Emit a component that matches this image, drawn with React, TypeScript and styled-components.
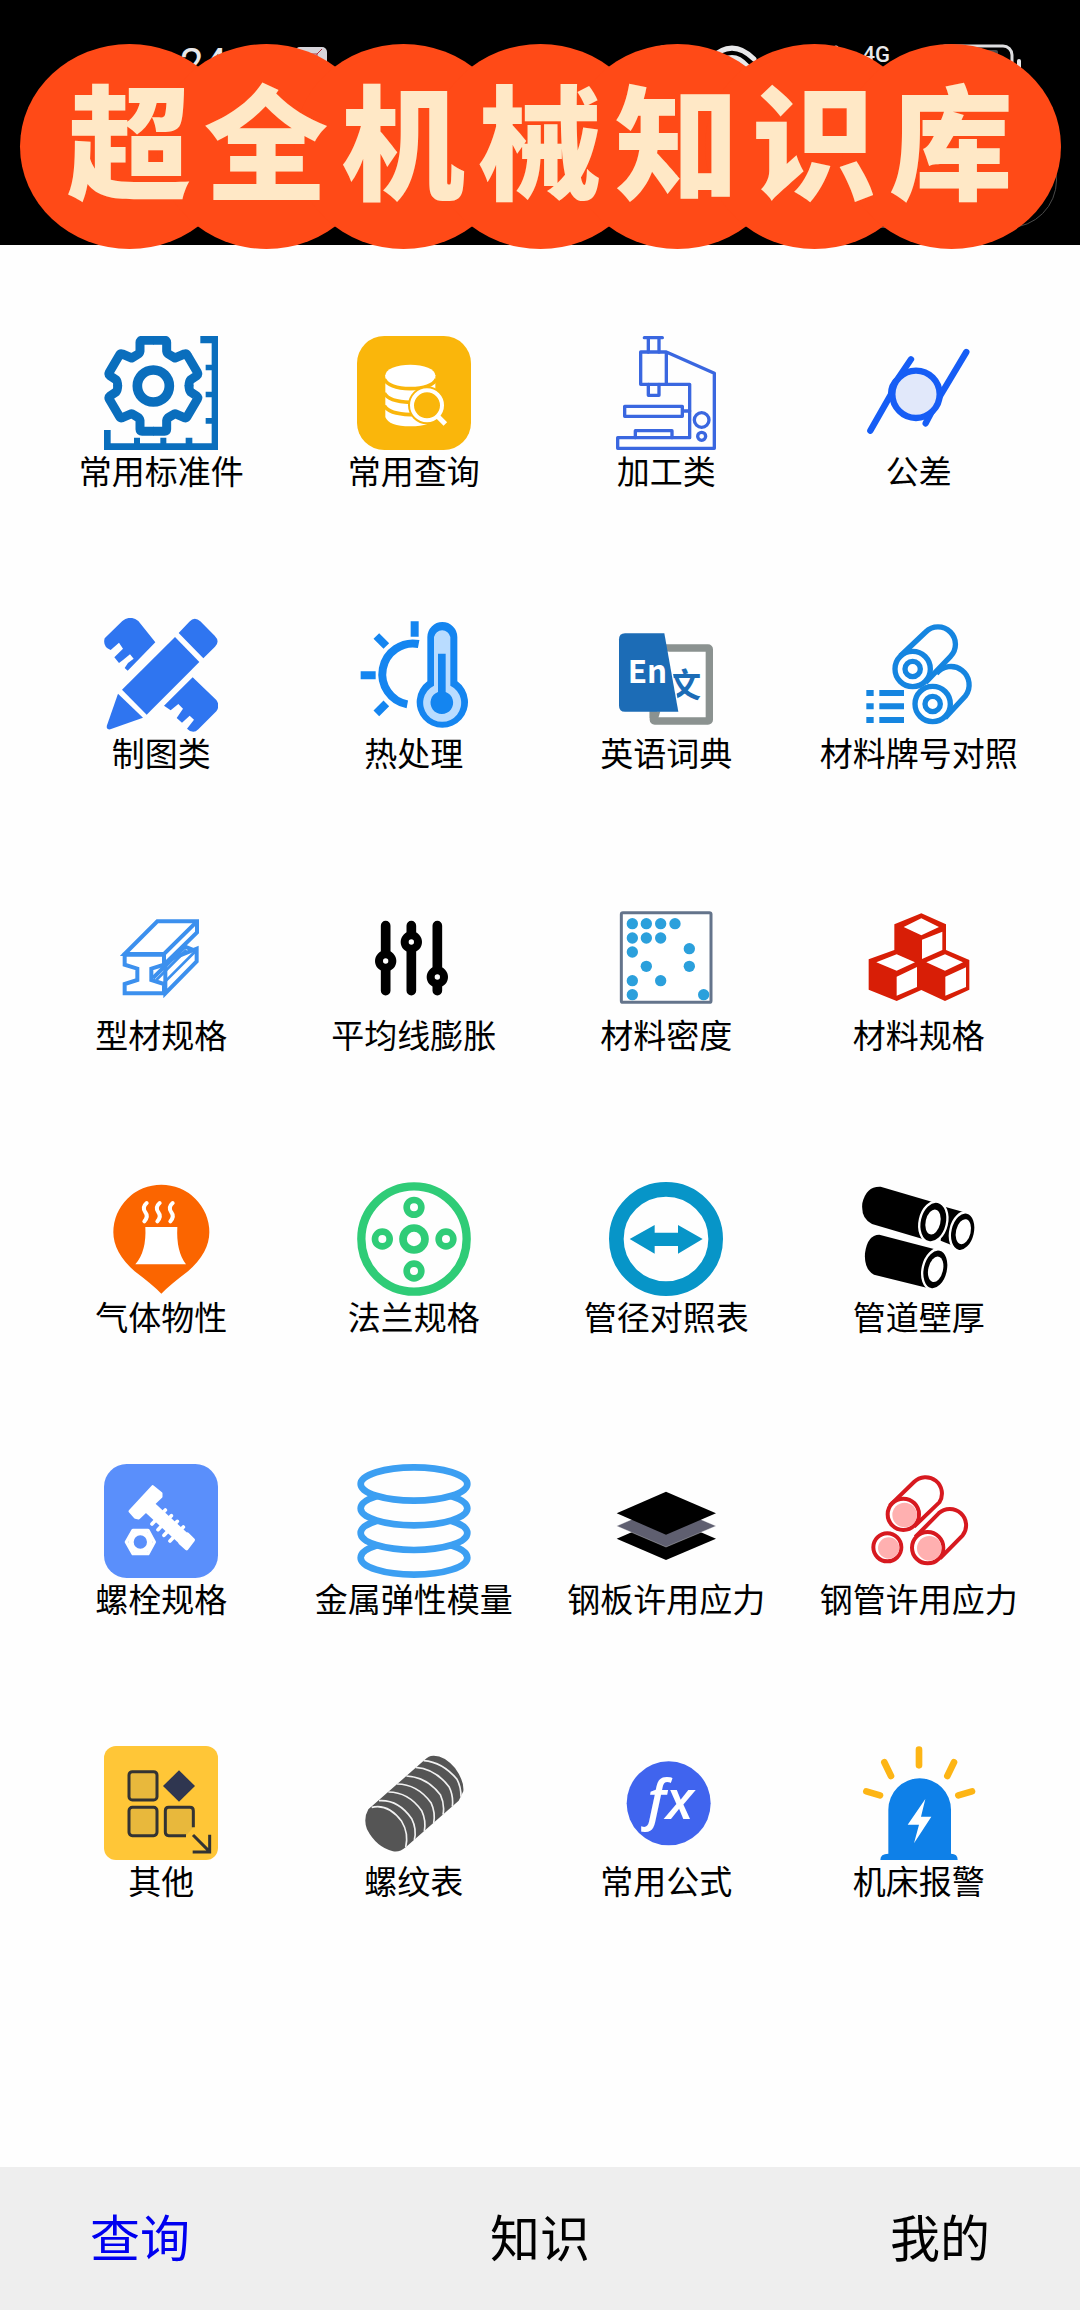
import React from "react";
import styled, { createGlobalStyle } from "styled-components";

const GlobalStyle = createGlobalStyle`
  * { box-sizing: border-box; }
  body {
    margin: 0;
    background: #fefefe;
    color: #000;
    font-family: "Noto Sans CJK SC", "Noto Sans", sans-serif;
  }
  button {
    margin: 0;
    padding: 0;
    border: 0;
    background: none;
    color: inherit;
    font: inherit;
    cursor: pointer;
  }
`;

const Page = styled.div`
  display: flex;
  flex-direction: column;
  min-height: 100vh;
`;

const Header = styled.header`
  position: relative;
  display: flex;
  flex-direction: column;
  height: 245px;
  background: #000;
`;

const StatusBar = styled.div`
  display: flex;
  justify-content: space-between;
  align-items: flex-start;
  height: 132px;
  padding: 44px 58px 0 180px;
  color: #e8e8ea;
  font-family: Roboto, sans-serif;
`;

const StatusGroup = styled.div<{ $gap: number }>`
  display: flex;
  align-items: flex-start;
  gap: ${(p) => p.$gap}px;
`;

const Clock = styled.span`
  font-size: 42px;
  line-height: 40px;
`;

const Network = styled.span`
  font-size: 22px;
  line-height: 22px;
  font-weight: 500;
`;

const Capsule = styled.div`
  align-self: flex-end;
  width: 260px;
  height: 96px;
  margin-right: 23px;
  border: 1px solid #4a4a4a;
  border-radius: 48px;
`;

const Banner = styled.h1`
  position: absolute;
  top: 44px;
  left: 0;
  right: 0;
  z-index: 1;
  display: flex;
  justify-content: center;
  margin: 0;
  isolation: isolate;
  color: #ffe8c6;
  font-size: 124px;
  font-weight: 900;
  line-height: 184px;
`;

const BannerChar = styled.span`
  position: relative;
  width: 137px;
  height: 205px;
  text-align: center;

  &::before {
    content: "";
    position: absolute;
    z-index: -1;
    inset: 0 -41px;
    border-radius: 50%;
    background: #ff4a17;
  }
`;

const Main = styled.main`
  flex: 1;
  padding: 91px 35px 60px;
`;

const Grid = styled.div`
  display: grid;
  grid-template-columns: repeat(4, 1fr);
  row-gap: 128px;
`;

const Tile = styled.button`
  display: flex;
  flex-direction: column;
  align-items: center;
`;

const TileIcon = styled.svg`
  display: block;
  width: 114px;
  height: 114px;
`;

const TileLabel = styled.span`
  font-size: 33px;
  line-height: 40px;
  white-space: nowrap;
`;

const TabBar = styled.nav`
  display: flex;
  justify-content: space-between;
  align-items: center;
  height: 143px;
  padding: 0 90px 8px;
  background: #eee;
`;

const Tab = styled.button<{ $active?: boolean }>`
  color: ${(p) => (p.$active ? "#0000f0" : "#000")};
  font-size: 50px;
  line-height: 72px;
`;

type Entry = { label: string; box: string; art: React.ReactNode };

const GEAR_HALF =
  "M280 88H315Q321 88 321 94V120Q322 127 329 131L346 141L374 129Q380 127 383 133L413 184Q416 190 411 194L393 206Q388 211 388 226";

const entries: Entry[] = [
  {
    label: "常用标准件",
    box: "133 75 342 342",
    art: (
      <>
        <g fill="none" stroke="#0a6ebd" strokeWidth="27" strokeLinejoin="round">
          <path d={GEAR_HALF} />
          <path d={GEAR_HALF} transform="matrix(-1 0 0 1 562 0)" />
          <path d={GEAR_HALF} transform="matrix(1 0 0 -1 0 449)" />
          <path d={GEAR_HALF} transform="matrix(-1 0 0 -1 562 449)" />
          <circle cx="281" cy="225" r="48" strokeWidth="29" />
        </g>
        <path
          fill="#0a6ebd"
          d="M422 75H475V417H133V357H153V397H223V380H241V397H302V380H320V397H378V380H398V397H456V338H438V321H456V259H438V242H456V178H438V161H456V97H422Z"
        />
      </>
    ),
  },
  {
    label: "常用查询",
    box: "890 75 342 342",
    art: (
      <>
        <rect x="890" y="75" width="342" height="342" rx="82" fill="#fab60b" />
        <path fill="#fff" d="M975 193V318Q985 346 1050 346Q1115 346 1125 318V193Z" />
        <g fill="none" stroke="#fab60b" strokeWidth="11">
          <path d="M972 204Q985 232 1050 233Q1115 232 1128 204" />
          <path d="M972 246Q985 272 1050 274Q1115 272 1128 246" />
          <path d="M972 284Q985 309 1050 311Q1115 309 1128 284" />
        </g>
        <ellipse cx="1050" cy="193" rx="75" ry="32" fill="#fff" />
        <circle cx="1100" cy="283" r="57" fill="#fab60b" />
        <path d="M1134 317L1157 340" stroke="#fab60b" strokeWidth="28" />
        <circle cx="1100" cy="283" r="45" fill="#fab60b" stroke="#fff" strokeWidth="12" />
        <path d="M1131 315L1155 339" stroke="#fff" strokeWidth="15" />
      </>
    ),
  },
  {
    label: "加工类",
    box: "118 75 342 342",
    art: (
      <g fill="none" stroke="#3a67e0" strokeWidth="10" strokeLinejoin="round" strokeLinecap="round">
        <path d="M224 80H278M236 80V123M268 80V123M236 220V253H268V220" />
        <path d="M213 123H290V220H213ZM290 123L434 187V412H144V380H360V220H290" />
        <path d="M165 286H338V316H165ZM338 300H360M197 380V359H307V380" />
        <circle cx="396" cy="327" r="22" />
        <circle cx="396" cy="376" r="12" />
      </g>
    ),
  },
  {
    label: "公差",
    box: "875 75 342 342",
    art: (
      <g stroke="#165df5" strokeWidth="19" strokeLinecap="round" strokeLinejoin="round">
        <path fill="none" d="M900 359L962 250Q962 222 982 204L1022 145M1188 123L1112 250L1066 337" />
        <circle cx="1037" cy="250" r="71" fill="#e1e8fa" />
      </g>
    ),
  },
  {
    label: "制图类",
    box: "133 52 342 342",
    art: (
      <g fill="#2f75f0">
        <path d="M188 61Q212 42 236 61L287 125L204 210L195 202L205 187L222 174L211 161L190 178L178 187L164 170L190 144L178 126L153 148Q128 138 135 113Z" />
        <path d="M399 230L470 298Q482 315 470 332L416 386Q400 402 382 384L403 357L390 345L367 366L351 352L370 324L356 310L333 329L313 315Z" />
        <path d="M346 109L419 184L261 342L187 267Z" />
        <path d="M357 97L389 63Q405 46 422 62L465 105Q482 122 466 138L431 173Z" />
        <path d="M175 279L250 351L152 386Q138 388 142 374Z" />
      </g>
    ),
  },
  {
    label: "热处理",
    box: "890 52 342 342",
    art: (
      <>
        <g fill="none" stroke="#1485f0" strokeWidth="24">
          <path d="M1075 130A92 92 0 0 0 1041 311" />
          <path d="M1063 62V108M948 106L978 136M901 224H946M948 338L978 308" />
        </g>
        <path
          fill="#1485f0"
          d="M1101 109A45 45 0 0 1 1191 109V242A77 77 0 1 1 1101 242Z"
        />
        <path
          fill="#b9dcff"
          d="M1121 109A25 25 0 0 1 1170 109V255A57 57 0 1 1 1121 255Z"
        />
        <path fill="#1485f0" d="M1133 159H1156V274A34 34 0 1 1 1133 274Z" />
      </>
    ),
  },
  {
    label: "英语词典",
    box: "118 52 342 342",
    art: (
      <>
        <rect x="251" y="142" width="168" height="219" rx="4" fill="#fff" stroke="#8b9290" strokeWidth="22" />
        <text x="294" y="288" fill="#1c6cb6" fontSize="100" fontWeight="700" fontFamily="Noto Sans CJK SC, sans-serif">
          文
        </text>
        <path fill="#fff" d="M262 153H298L332 340H262Z" />
        <path fill="#8b9290" d="M240 332H272L266 352H240Z" />
        <path fill="#1c6cb6" d="M166 98H284L326 333H166Q148 333 148 315V116Q148 98 166 98Z" />
        <text x="174" y="247" fill="#fff" fontSize="94" fontWeight="700" fontFamily="Noto Sans CJK SC, sans-serif">
          En
        </text>
      </>
    ),
  },
  {
    label: "材料牌号对照",
    box: "875 52 342 342",
    art: (
      <>
        <g fill="none" stroke="#1585e0" strokeWidth="16">
          <path d="M990 166L1066 94A52 52 0 0 1 1140 168L1066 245" />
          <path d="M1098 219A51 51 0 0 1 1185 286L1124 352" />
          <circle cx="1027" cy="205" r="53" fill="#fff" />
          <circle cx="1087" cy="310" r="53" fill="#fff" />
          <circle cx="1027" cy="205" r="23" />
          <circle cx="1087" cy="310" r="23" />
        </g>
        <path
          fill="#1585e0"
          d="M888 268H910V286H888ZM927 268H1001V286H927ZM888 308H910V326H888ZM927 308H1001V326H927ZM888 349H910V367H888ZM927 349H1001V367H927Z"
        />
      </>
    ),
  },
  {
    label: "型材规格",
    box: "133 28 342 342",
    art: (
      <g fill="#fff" stroke="#3c90ee" strokeWidth="12">
        <path d="M317 212L411 174V212L317 308Z" />
        <path d="M280 262L376 168L411 182" fill="none" />
        <path d="M314 275L405 184M290 268L380 178" fill="none" strokeWidth="8" />
        <path d="M195 192H313V222L275 234V268L313 280V308H195V280L233 268V234L195 222Z" />
        <path d="M195 190L293 92H412V125L313 222V190Z" />
        <path d="M195 190H313L412 92" fill="none" />
      </g>
    ),
  },
  {
    label: "平均线膨胀",
    box: "890 28 342 342",
    art: (
      <>
        <path d="M976 105V300M1053 105V300M1131 105V300" stroke="#000" strokeWidth="29" strokeLinecap="round" />
        <g fill="#fff" stroke="#000" strokeWidth="24">
          <circle cx="976" cy="211" r="20" />
          <circle cx="1053" cy="154" r="20" />
          <circle cx="1131" cy="259" r="20" />
        </g>
      </>
    ),
  },
  {
    label: "材料密度",
    box: "118 28 342 342",
    art: (
      <>
        <rect x="155" y="66" width="269" height="269" rx="5" fill="#fff" stroke="#64748b" strokeWidth="9" />
        <g fill="#2ba0dc">
          {[
            [188, 99], [230, 99], [273, 99], [316, 99],
            [188, 142], [230, 142], [273, 142],
            [188, 184], [359, 174], [230, 227], [359, 227],
            [188, 270], [273, 270], [188, 312], [402, 312],
          ].map(([x, y]) => (
            <circle key={`${x}-${y}`} cx={x} cy={y} r="17" />
          ))}
        </g>
      </>
    ),
  },
  {
    label: "材料规格",
    box: "875 28 342 342",
    art: (
      <>
        <path
          fill="#d81e06"
          d="M1053 68L1127 101V178L1197 208V297L1124 331L1053 298L979 331L895 297V206L972 178V101Z"
        />
        <path
          fill="#fff"
          d="M1053 83L1106 109L1053 134L1000 109ZM1055 147L1116 123V178L1055 205ZM979 191L1034 215L979 240L918 215ZM979 258L1040 229V289L979 315ZM1124 191L1178 215L1124 240L1068 215ZM1125 258L1187 230V289L1125 315Z"
        />
      </>
    ),
  },
  {
    label: "气体物性",
    box: "0 0 342 342",
    art: (
      <>
        <path fill="#fb6500" d="M172 335Q145 308 92 268Q28 212 28 151A144 143 0 0 1 316 151Q316 212 252 268Q199 308 172 335Z" />
        <path fill="#fff" d="M124 135H220Q216 208 246 247H94Q128 208 124 135Z" />
        <g fill="none" stroke="#fff" strokeWidth="12" strokeLinecap="round">
          <path d="M128 63Q113 76 124 91Q134 104 121 118" />
          <path d="M167 63Q152 76 163 91Q173 104 160 118" />
          <path d="M206 63Q191 76 202 91Q212 104 199 118" />
        </g>
      </>
    ),
  },
  {
    label: "法兰规格",
    box: "0 0 342 342",
    art: (
      <g fill="none" stroke="#2fcc77" strokeWidth="20">
        <circle cx="171" cy="171" r="158" strokeWidth="25" />
        <circle cx="171" cy="171" r="33" strokeWidth="23" />
        <circle cx="171" cy="76" r="22" />
        <circle cx="171" cy="267" r="22" />
        <circle cx="76" cy="171" r="22" />
        <circle cx="267" cy="171" r="22" />
      </g>
    ),
  },
  {
    label: "管径对照表",
    box: "0 0 342 342",
    art: (
      <>
        <circle cx="171" cy="171" r="149" fill="none" stroke="#0795c8" strokeWidth="44" />
        <path fill="#0795c8" d="M62 171L137 129V152H207V129L281 171L207 215V192H137V215Z" />
      </>
    ),
  },
  {
    label: "管道壁厚",
    box: "0 0 342 342",
    art: (
      <>
        <path d="M240 72L326 96L306 204L236 176Z" />
        <ellipse cx="302" cy="149" rx="37" ry="59" transform="rotate(13 302 149)" stroke="#fff" strokeWidth="7" />
        <ellipse cx="304" cy="149" rx="22" ry="38" transform="rotate(13 304 149)" fill="#fff" />
        <path d="M56 14L232 66L200 176L30 126Q-4 110 1 64Q12 12 56 14Z" />
        <ellipse cx="214" cy="120" rx="41" ry="62" transform="rotate(13 214 120)" stroke="#fff" strokeWidth="7" />
        <ellipse cx="213" cy="120" rx="22" ry="38" transform="rotate(13 213 120)" fill="#fff" />
        <path d="M52 158L236 206L206 320L36 278Q6 262 9 214Q16 158 52 158Z" />
        <ellipse cx="220" cy="262" rx="38" ry="61" transform="rotate(13 220 262)" stroke="#fff" strokeWidth="7" />
        <ellipse cx="221" cy="262" rx="22" ry="39" transform="rotate(13 221 262)" fill="#fff" />
      </>
    ),
  },
  {
    label: "螺栓规格",
    box: "0 0 342 342",
    art: (
      <>
        <rect width="342" height="342" rx="68" fill="#5a8ffb" />
        <g fill="none" stroke="#fff" strokeLinejoin="round">
          <path d="M146 68L171 88L171 98L104 162L94 160L78 142Z" fill="#fff" strokeWidth="9" />
          <path d="M128 122L252 236" strokeWidth="40" />
          <path
            d="M184 138L144 180M202 155L162 197M220 172L180 214M238 189L198 231"
            strokeWidth="11"
            strokeLinecap="round"
          />
          <path d="M268 228L248 254L228 236L250 210Z" fill="#fff" strokeWidth="10" />
        </g>
        <path d="M87 199H132L151 234L132 269H87L67 234Z" fill="none" stroke="#fff" strokeWidth="10" strokeLinejoin="round" />
        <circle cx="109" cy="234" r="28" fill="none" stroke="#fff" strokeWidth="16" />
      </>
    ),
  },
  {
    label: "金属弹性模量",
    box: "0 0 342 342",
    art: (
      <g fill="#fefefe" stroke="#3c9ff2" strokeWidth="20">
        <ellipse cx="171" cy="281" rx="160" ry="51" />
        <ellipse cx="171" cy="207" rx="160" ry="51" />
        <ellipse cx="171" cy="133" rx="160" ry="51" />
        <ellipse cx="171" cy="60" rx="160" ry="50" />
      </g>
    ),
  },
  {
    label: "钢板许用应力",
    box: "0 0 342 342",
    art: (
      <>
        <path d="M171 160L321 224L171 288L23 224Z" />
        <path d="M171 122L321 186L171 249L23 186Z" fill="#5f5f70" stroke="#fff" strokeWidth="1" />
        <path d="M171 83L321 148L171 212L23 148Z" />
      </>
    ),
  },
  {
    label: "钢管许用应力",
    box: "0 0 342 342",
    art: (
      <>
        <g fill="#fff" stroke="#d7191f" strokeWidth="12">
          <path d="M83 125L156 54A49 49 0 0 1 232 115L156 188" />
          <path d="M160 219L230 148A49 49 0 0 1 302 214L234 283" />
          <circle cx="124" cy="151" r="47" />
          <circle cx="197" cy="251" r="47" />
          <circle cx="76" cy="250" r="42" />
        </g>
        <g fill="#ffb0b0">
          <circle cx="128" cy="153" r="37" />
          <circle cx="202" cy="253" r="37" />
          <circle cx="80" cy="252" r="32" />
        </g>
      </>
    ),
  },
  {
    label: "其他",
    box: "0 0 342 342",
    art: (
      <>
        <rect width="342" height="342" rx="36" fill="#ffc637" />
        <g fill="#e8b83c" stroke="#333" strokeWidth="9" strokeLinejoin="round">
          <rect x="75" y="77" width="84" height="85" rx="10" />
          <rect x="75" y="184" width="84" height="85" rx="10" />
          <path d="M246 269H194Q184 269 184 259V194Q184 184 194 184H258Q268 184 268 194V244" />
        </g>
        <path d="M225 73L273 120L225 167L177 120Z" fill="#2f3650" />
        <path d="M267 267L316 316M266 318H317V266" fill="none" stroke="#333" strokeWidth="9" />
      </>
    ),
  },
  {
    label: "螺纹表",
    box: "0 0 342 342",
    art: (
      <>
        <path
          fill="#555"
          d="M229 29Q262 28 294 66Q322 104 319 136L305 164L146 304Q128 320 108 316Q58 304 30 250Q18 218 34 190L205 40Q214 30 229 29Z"
        />
        <g fill="none" stroke="#f2f2f2" strokeWidth="5">
          <path d="M44 184Q94 172 134 226Q156 262 146 304" />
          <path d="M66 164Q124 160 164 218Q180 250 172 282" />
          <path d="M94 138Q154 138 194 194Q208 224 202 256" />
          <path d="M120 114Q180 114 222 170Q236 200 230 232" />
          <path d="M148 90Q208 92 250 146Q264 176 258 206" />
          <path d="M176 64Q234 68 276 122Q290 150 286 182" />
          <path d="M200 44Q256 48 300 100Q312 122 312 152" />
        </g>
      </>
    ),
  },
  {
    label: "常用公式",
    box: "0 0 342 342",
    art: (
      <>
        <circle cx="179" cy="172" r="126" fill="#4064ee" />
        <text
          x="184"
          y="218"
          textAnchor="middle"
          fill="#fff"
          fontSize="164"
          fontWeight="600"
          fontStyle="italic"
          fontFamily="Open Sans, sans-serif"
        >
          fx
        </text>
      </>
    ),
  },
  {
    label: "机床报警",
    box: "0 0 342 342",
    art: (
      <>
        <path fill="#0e80e8" d="M79 191A94 94 0 0 1 267 191V323Q287 323 287 342H55Q55 323 79 323Z" />
        <path fill="#fff" d="M190 159L137 236H171L156 292L208 212H177Z" />
        <path
          fill="none"
          stroke="#fdb515"
          strokeWidth="20"
          strokeLinecap="round"
          d="M171 11V58M67 49L87 90M276 49L256 90M13 136L54 148M330 136L289 148"
        />
      </>
    ),
  },
];

const tabs = ["查询", "知识", "我的"];

export default function App() {
  const [active, setActive] = React.useState(tabs[0]);

  return (
    <Page>
      <GlobalStyle />
      <Header>
        <StatusBar>
          <StatusGroup $gap={68}>
            <Clock>24</Clock>
            <svg width="34" height="40" viewBox="0 0 34 40" aria-hidden="true">
              <rect y="3" width="32" height="34" rx="5" fill="#d6d4da" />
              <path d="M14 10H22L27 5M22 10V15" fill="none" stroke="#b0303c" strokeWidth="1" />
            </svg>
          </StatusGroup>
          <StatusGroup $gap={24}>
            <svg width="24" height="30" viewBox="0 0 24 30" aria-hidden="true">
              <rect x="1" y="3" width="20" height="24" rx="4" fill="none" stroke="#dedee0" strokeWidth="3" />
            </svg>
            <svg width="54" height="40" viewBox="0 0 54 40" aria-hidden="true">
              <path
                d="M5 15Q27 -7 49 15M12 22Q27 5 42 22"
                fill="none"
                stroke="#e8e8ea"
                strokeWidth="5"
                strokeLinecap="round"
              />
            </svg>
            <svg width="56" height="30" viewBox="0 0 56 30" aria-hidden="true">
              <path d="M53 4V26" stroke="#e8e8ea" strokeWidth="5" strokeLinecap="round" />
            </svg>
            <Network>4G</Network>
            <svg width="108" height="36" viewBox="0 0 108 36" aria-hidden="true">
              <rect x="22" y="2" width="76" height="34" rx="9" fill="none" stroke="#dedee0" strokeWidth="3" />
              <rect x="27" y="6" width="57" height="26" rx="2" fill="#4a4a4c" />
              <rect x="103" y="15" width="4" height="12" rx="2" fill="#e8e8ea" />
            </svg>
          </StatusGroup>
        </StatusBar>
        <Capsule />
        <Banner aria-label="超全机械知识库">
          {Array.from("超全机械知识库").map((ch) => (
            <BannerChar key={ch}>{ch}</BannerChar>
          ))}
        </Banner>
      </Header>
      <Main>
        <Grid>
          {entries.map((e) => (
            <Tile key={e.label} type="button">
              <TileIcon viewBox={e.box} aria-hidden="true">
                {e.art}
              </TileIcon>
              <TileLabel>{e.label}</TileLabel>
            </Tile>
          ))}
        </Grid>
      </Main>
      <TabBar>
        {tabs.map((t) => (
          <Tab key={t} type="button" $active={t === active} onClick={() => setActive(t)}>
            {t}
          </Tab>
        ))}
      </TabBar>
    </Page>
  );
}
